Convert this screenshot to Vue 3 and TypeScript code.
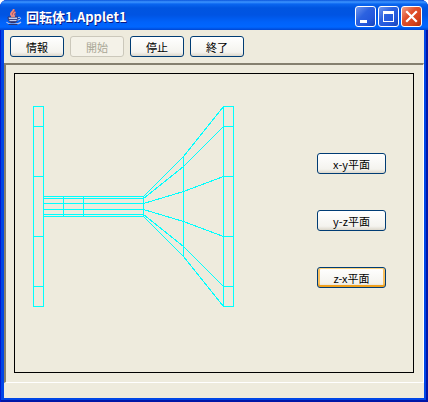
<script setup lang="ts">
import { ref } from 'vue'

type Point = [number, number]
type Plane = 'x-y' | 'y-z' | 'z-x'

const planes: Plane[] = ['x-y', 'y-z', 'z-x']
const activePlane = ref<Plane>('z-x')
const running = ref(true)

// Centre line of the solid, and the silhouette offsets of each generatrix
const axis = 132
const profiles: [number, number, number, number][] = [
  [-10, -10, -50, -100],
  [-8, -8, -40, -80],
  [-3, -3, -15, -30],
  [3, 3, 15, 30],
  [8, 8, 40, 80],
  [10, 10, 50, 100],
]
const stations = [28, 128, 168, 208]

const generatrices = profiles.map((offsets) =>
  offsets.map((dy, i): Point => [stations[i], axis + dy]).map((p) => p.join(',')).join(' '),
)

const flangeLevels = [-100, -80, -30, 30, 80, 100].map((d) => axis + d)
const flanges = [18, 208]
const rings = [
  { x: 48, r: 10 },
  { x: 68, r: 10 },
  { x: 128, r: 10 },
  { x: 168, r: 50 },
]
</script>

<template>
  <main class="window">
    <header class="titlebar">
      <svg class="java" viewBox="0 0 16 16" aria-hidden="true">
        <path d="M2 8h10l-.5 3-2 2.500h-5L2.500 11z" fill="#c3cdec" stroke="#2e3470" />
        <path d="M12 8.500c3.500-1 3.500 2.500-.5 2.500" fill="none" stroke="#c3cdec" />
        <path d="M3 10.500h8M4 12.500h6" stroke="#3f4889" />
        <path d="M.5 13c2 2.800 12 2.800 14.500 0" fill="none" stroke="#b9c4e8" stroke-width="1.200" />
        <path d="M2.500 15.500h9" stroke="#2e3470" />
        <path d="M7.500 0c1 2.500-3.500 3.500-2.500 5.500L6.500 8M9.500 3c-3 1.500-2.500 2.500-1.500 3.500V8" fill="none" stroke="#f58c78" stroke-width="1.800" />
        <path d="M8.500 1c.5 2-3 3-2 4.500M10 4.500c-1 .5-1 1 0 2" fill="none" stroke="#d9483a" stroke-width=".8" />
      </svg>
      <h1>回転体1.Applet1</h1>
      <div class="controls">
        <button class="control" type="button" aria-label="最小化">
          <svg viewBox="0 0 19 19"><path d="M4 13h7v3H4z" fill="#fff" /></svg>
        </button>
        <button class="control" type="button" aria-label="最大化">
          <svg viewBox="0 0 19 19"><path d="M4 4h11v11H4zM5 7v7h9V7z" fill="#fff" fill-rule="evenodd" /></svg>
        </button>
        <button class="control close" type="button" aria-label="閉じる">
          <svg viewBox="0 0 19 19"><path d="M5 5l9 9M14 5l-9 9" stroke="#fff" stroke-width="2.200" stroke-linecap="square" /></svg>
        </button>
      </div>
    </header>
    <div class="client">
      <nav class="toolbar">
        <button class="btn" type="button">情報</button>
        <button class="btn" type="button" :disabled="running" @click="running = true">開始</button>
        <button class="btn" type="button" @click="running = false">停止</button>
        <button class="btn" type="button">終了</button>
      </nav>
      <section class="frame">
        <div class="applet">
          <svg class="drawing" width="240" height="260" viewBox="0 0 240 260" role="img" aria-label="回転体">
            <g fill="none" stroke="#00ffff" shape-rendering="crispEdges" transform="translate(.5 .5)">
              <polyline v-for="points in generatrices" :key="points" :points="points" />
              <line v-for="ring in rings" :key="ring.x" :x1="ring.x" :x2="ring.x" :y1="axis - ring.r" :y2="axis + ring.r" />
              <g v-for="x in flanges" :key="x">
                <rect :x="x" :y="axis - 100" width="10" height="200" />
                <line v-for="y in flangeLevels" :key="y" :x1="x" :x2="x + 10" :y1="y" :y2="y" />
              </g>
            </g>
          </svg>
          <div class="planes">
            <button
              v-for="plane in planes"
              :key="plane"
              class="btn plane"
              :class="{ active: plane === activePlane }"
              type="button"
              @click="activePlane = plane"
            >{{ plane }}平面</button>
          </div>
        </div>
      </section>
      <footer class="status"></footer>
    </div>
  </main>
</template>

<style>
body {
  margin: 0;
  background: #fff;
}
</style>

<style scoped>
.window {
  box-sizing: border-box;
  display: flex;
  flex-direction: column;
  min-height: 100vh;
  padding: 0 4px 4px;
  background: #0046e6;
  border-radius: 7px 7px 0 0;
  box-shadow: inset 1px 0 #0019cf, inset -2px 0 #0016a8, inset 0 -2px #0016a8;
  font-family: "Noto Sans CJK JP", sans-serif;
}
.titlebar {
  display: flex;
  align-items: center;
  gap: 4px;
  height: 30px;
  margin: 0 -4px;
  padding: 3px 6px 0;
  box-sizing: border-box;
  border-radius: 7px 7px 0 0;
  background: linear-gradient(#0a54dc 0, #3d95ff 2px, #0a66f0 4px, #0055e0 8px, #0054e3 15px, #0062fa 22px, #0066ff 27px, #0046d2 30px);
}
.java {
  width: 16px;
  height: 16px;
}
h1 {
  flex: 1;
  margin: 0;
  color: #fff;
  font-size: 13px;
  font-weight: 700;
  line-height: 20px;
  text-shadow: 1px 1px #0a1883;
}
.controls {
  display: flex;
  gap: 2px;
}
.control {
  box-sizing: border-box;
  width: 21px;
  height: 21px;
  padding: 0;
  border: 1px solid #fff;
  border-radius: 3px;
  background: linear-gradient(135deg, #6f96ee, #2c62e0 40%, #2458dc 70%, #1744b8);
}
.control svg {
  display: block;
  width: 19px;
  height: 19px;
}
.close {
  background: linear-gradient(135deg, #f0a088, #e0502c 40%, #d8441e 70%, #b03010);
}
.client {
  flex: 1;
  display: flex;
  flex-direction: column;
  background: #eeebdd;
}
.toolbar {
  display: flex;
  gap: 6px;
  padding: 6px;
}
.btn {
  box-sizing: border-box;
  width: 54px;
  height: 21px;
  padding: 0;
  border: 1px solid #003c74;
  border-radius: 3px;
  background: linear-gradient(#fff, #f4f3ee 80%, #dcd7cb);
  color: #000;
  font-family: inherit;
  font-size: 11px;
  line-height: 18px;
}
.btn:disabled {
  border-color: #cbc8bb;
  background: #f4f2e8;
  color: #a9a796;
}
.frame {
  flex: 1;
  display: flex;
  border: solid;
  border-width: 2px 1px 1px 2px;
  border-color: #85806f #fff #fff #85806f;
  padding: 8px 9px 9px 8px;
}
.applet {
  flex: 1;
  display: flex;
  align-items: flex-start;
  justify-content: space-between;
  border: 1px solid #000;
}
.drawing {
  flex: none;
}
.planes {
  display: flex;
  flex-direction: column;
  gap: 36px;
  padding: 79px 27px 0 0;
}
.plane {
  width: 69px;
}
.active {
  box-shadow: inset 0 1px #fbd17a, inset 0 -2px #efa01e, inset 2px 0 #f8c060, inset -2px 0 #f8c060;
}
.status {
  height: 15px;
}
</style>
